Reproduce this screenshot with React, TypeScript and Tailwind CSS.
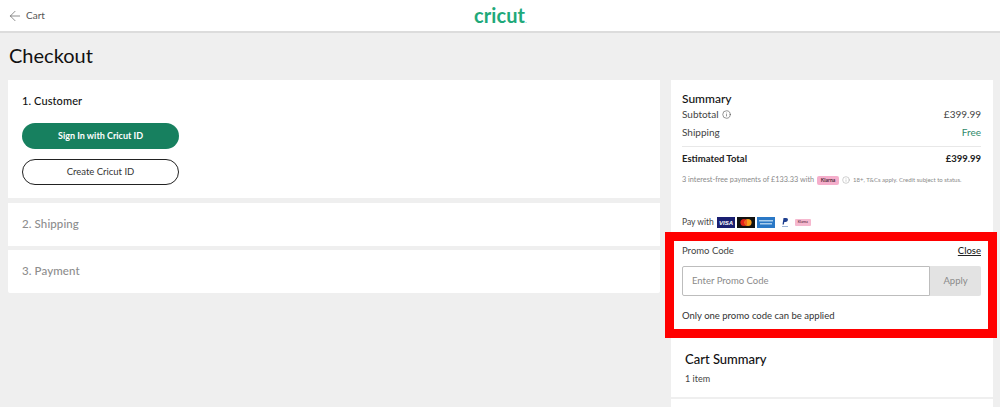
import { ArrowLeft, Info } from 'lucide-react';

const font = "font-['Lato','Noto_Sans',sans-serif]";

const Row = ({ label, value, valueClass, info }: { label: string; value: string; valueClass?: string; info?: boolean }) => (
  <div className="flex items-center justify-between text-[10px] leading-[14px] text-[#444]">
    <span className="flex items-center gap-[3px]">
      {label}
      {info && <Info className="h-[9px] w-[9px]" strokeWidth={1.5} />}
    </span>
    <span className={valueClass}>{value}</span>
  </div>
);

const PayIcons = () => (
  <div className="flex items-center">
    <svg width="18" height="11" viewBox="0 0 18 11" className="mr-[2px]">
      <rect width="18" height="11" fill="#1a1f71" />
      <text x="9" y="8" fontSize="6" fontWeight="900" fontStyle="italic" fill="#fff" textAnchor="middle" fontFamily="Liberation Sans">VISA</text>
    </svg>
    <svg width="18" height="11" viewBox="0 0 18 11" className="mr-[2px]">
      <rect width="18" height="11" fill="#111" />
      <circle cx="7" cy="5.5" r="3.6" fill="#e2231a" />
      <circle cx="11" cy="5.5" r="3.6" fill="#f79e1b" />
      <rect x="8" y="3" width="2" height="5" fill="#f26122" />
    </svg>
    <svg width="18" height="11" viewBox="0 0 18 11" className="mr-[5px]">
      <rect width="18" height="11" fill="#2a78c6" />
      <rect x="2" y="3" width="14" height="1.5" fill="#a9cdec" />
      <rect x="3" y="6" width="12" height="1.5" fill="#a9cdec" />
    </svg>
    <svg width="10" height="11" viewBox="0 0 10 11" className="mr-[5px]">
      <path d="M3.5 1h2.6c1.4 0 2 .8 1.800 1.900-.2 1.300-1.200 2-2.500 2H4.300L3.800 7.500H2.500z" fill="#1f3f8f" />
      <rect x="2" y="9" width="6" height="1" fill="#9db4d6" />
    </svg>
    <span className="flex h-[7px] w-[16px] items-center justify-center rounded-[1px] bg-[#f6b8cf] text-[3.500px] font-bold text-[#6b3a4b]">Klarna</span>
  </div>
);

export default function App() {
  return (
    <div className={`h-[407px] w-[1000px] overflow-hidden bg-[#efefef] ${font}`}>
      <header className="relative flex h-[33px] items-center border-b-2 border-[#dcdcdc] bg-white pl-[7px]">
        <div className="flex items-center gap-[3px] text-[10px] text-[#555]">
          <ArrowLeft className="h-[16px] w-[16px]" strokeWidth={1} />
          Cart
        </div>
        <span className="absolute left-[474px] top-[3px] text-[20px] font-bold leading-[25px] tracking-[0.1px] text-[#1fa97a]">
          cricut<span className="text-[6px] font-normal">.</span>
        </span>
      </header>

      <h1 className="ml-[9px] mt-[9px] h-[38px] text-[20px] leading-[26px] text-[#111]">Checkout</h1>

      <div className="flex items-start pl-[8px]">
        <div className="flex w-[652px] flex-col">
          <section className="h-[118px] bg-white pl-[14px] pt-[14px]">
            <h2 className="text-[11px] font-medium leading-[14px] tracking-[0.1px] text-[#111]">1. Customer</h2>
            <button className="mt-[15px] flex h-[26px] w-[157px] items-center justify-center rounded-full bg-[#17805f] text-[9px] font-bold text-white">
              Sign In with Cricut ID
            </button>
            <button className="mt-[10px] flex h-[26px] w-[157px] items-center justify-center rounded-full border border-[#222] bg-white text-[9.500px] text-[#333]">
              Create Cricut ID
            </button>
          </section>
          <section className="mt-[5px] flex h-[43px] items-center bg-white pb-[1px] pl-[14px] text-[11.500px] font-medium tracking-[0.1px] text-[#8d8d8d]">2. Shipping</section>
          <section className="mt-[4px] flex h-[43px] items-center rounded-b-[2px] bg-white pb-[1px] pl-[14px] text-[11.500px] font-medium tracking-[0.1px] text-[#8d8d8d]">3. Payment</section>
        </div>

        <aside className="ml-[11px] flex w-[322px] flex-col">
          <div className="h-[152px] bg-white pl-[11px] pr-[12px] pt-[12px]">
            <h2 className="text-[12px] font-medium leading-[14px] text-[#111]">Summary</h2>
            <div className="pt-[1px]">
              <Row label="Subtotal" value="£399.99" info />
            </div>
            <div className="mt-[4px] border-b border-[#e8e8e8] pb-[7px]">
              <Row label="Shipping" value="Free" valueClass="text-[#2f8a6b]" />
            </div>
            <div className="mt-[5px] flex justify-between text-[9.500px] font-bold leading-[14px] text-[#222]">
              <span>Estimated Total</span>
              <span>£399.99</span>
            </div>
            <div className="mt-[8px] flex items-center text-[7.300px] leading-[12px] text-[#8a8a8a]">
              3 interest-free payments of £133.33 with
              <span className="ml-[3px] flex h-[9px] w-[22px] items-center justify-center rounded-[2px] bg-[#f5aecb] text-[5px] font-bold text-[#4b2b37]">Klarna</span>
              <Info className="ml-[3px] h-[8px] w-[8px]" strokeWidth={1.2} />
              <span className="ml-[3px] text-[6px]">18+, T&amp;Cs apply. Credit subject to status.</span>
            </div>
            <div className="mt-[30px] flex items-center gap-[3px] text-[8.500px] text-[#444]">
              Pay with
              <PayIcons />
            </div>
          </div>

          <div className="-ml-[6px] w-[332px] border-[9px] border-[#ff0000] bg-white pl-[8px] pr-[7px] pt-[3px]">
            <div className="flex items-center justify-between pt-[1px] text-[9.500px] leading-[12px]">
              <span className="text-[#444]">Promo Code</span>
              <a className="font-medium text-[#222] underline">Close</a>
            </div>
            <div className="mt-[9px] flex h-[30px]">
              <div className="flex flex-1 items-center rounded-l-[2px] border border-[#bdbdbd] pl-[9px] pt-[1px] text-[9.500px] text-[#8a8a8a]">Enter Promo Code</div>
              <button className="flex w-[51px] items-center justify-center rounded-r-[2px] bg-[#e3e3e3] text-[9.500px] text-[#8a8a8a]">Apply</button>
            </div>
            <p className="mt-[14px] h-[19px] text-[9.500px] leading-[12px] text-[#333]">Only one promo code can be applied</p>
          </div>

          <div className="h-[59px] bg-white pl-[14px] pt-[13px]">
            <h2 className="text-[13px] font-medium leading-[16px] text-[#111]">Cart Summary</h2>
            <p className="mt-[6px] text-[9px] leading-[12px] text-[#444]">1 item</p>
          </div>
          <div className="mt-[2px] h-[20px] bg-white" />
        </aside>
      </div>
    </div>
  );
}
